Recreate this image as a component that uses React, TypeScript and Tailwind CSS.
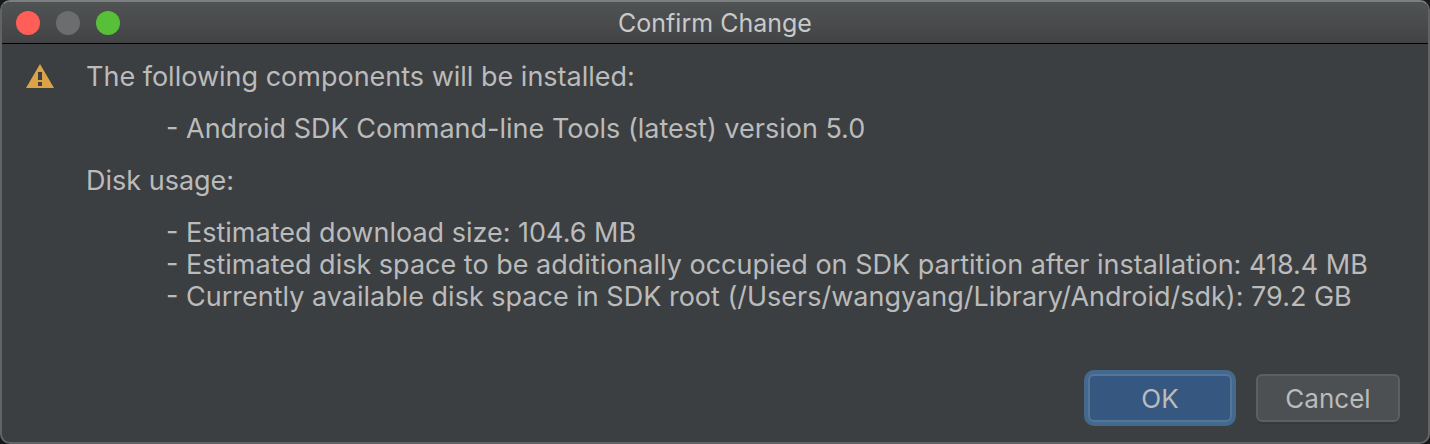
const INSTALL_ITEMS = ['Android SDK Command-line Tools (latest) version 5.0'];

const DISK_ITEMS = [
  'Estimated download size: 104.6 MB',
  'Estimated disk space to be additionally occupied on SDK partition after installation: 418.4 MB',
  'Currently available disk space in SDK root (/Users/wangyang/Library/Android/sdk): 79.2 GB',
];

function TitleBar({ title }: { title: string }) {
  return (
    <header className="grid h-[42px] grid-cols-[1fr_auto_1fr] items-center border-b border-black bg-linear-to-b from-[#505354] to-[#424344] px-3.5">
      <div className="flex gap-4">
        <button type="button" aria-label="Close" className="size-6 rounded-full bg-[#ff5f57]" />
        <button type="button" aria-label="Minimize" disabled className="size-6 rounded-full bg-[#6c6d6f]" />
        <button type="button" aria-label="Zoom" className="size-6 rounded-full bg-[#58c038]" />
      </div>
      <h1 className="text-[25px] leading-8 text-[#c8c9ca]">{title}</h1>
    </header>
  );
}

function WarningIcon() {
  return (
    <svg className="mt-[3px] h-6 w-7 shrink-0" viewBox="0 0 28 24" aria-hidden="true">
      <path d="M14 0L28 24H0Z" fill="#dba345" />
      <path d="M12 8h4v8h-4zM12 18h4v4h-4z" fill="#3c3f41" />
    </svg>
  );
}

function DashList({ items }: { items: string[] }) {
  return (
    <ul className="pl-20">
      {items.map((item) => (
        <li key={item}>- {item}</li>
      ))}
    </ul>
  );
}

export default function App() {
  return (
    <div className="min-h-screen bg-[#17181a] font-['Inter','Liberation_Sans',sans-serif]">
      <div
        role="dialog"
        aria-label="Confirm Change"
        className="flex min-h-screen flex-col overflow-hidden rounded-[10px] border-2 border-[#616364] border-t-[#7c7e7f] bg-[#3c3f41]"
      >
        <TitleBar title="Confirm Change" />
        <main className="flex gap-8 px-6 pt-[17px] text-[27px] leading-8 text-[#bbbbbb]">
          <WarningIcon />
          <div className="flex flex-col gap-5">
            <p>The following components will be installed:</p>
            <DashList items={INSTALL_ITEMS} />
            <p>Disk usage:</p>
            <DashList items={DISK_ITEMS} />
          </div>
        </main>
        <footer className="mt-auto flex justify-end gap-6 px-7 pb-5 text-[26px] leading-8 text-[#bbbbbb]">
          <button
            type="button"
            className="h-12 w-36 rounded-md border-2 border-[#537699] bg-[#365880] pt-0.5 ring-4 ring-[#43698e]"
          >
            OK
          </button>
          <button
            type="button"
            className="h-12 w-36 rounded-md border-2 border-[#5e6060] bg-[#4c5052] pt-0.5 shadow-[0_2px_0_#37393b]"
          >
            Cancel
          </button>
        </footer>
      </div>
    </div>
  );
}
